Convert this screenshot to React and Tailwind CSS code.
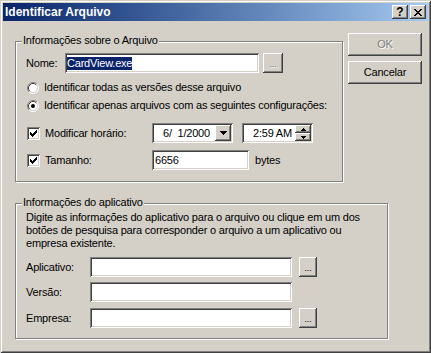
import React from "react";

const OUT = "shadow-[inset_-1px_-1px_#404040,inset_1px_1px_#ffffff,inset_-2px_-2px_#808080,inset_2px_2px_#d4d0c8]";
const IN = "shadow-[inset_1px_1px_#808080,inset_-1px_-1px_#ffffff,inset_2px_2px_#404040,inset_-2px_-2px_#d4d0c8]";
const ETCH = "border border-[#808080] shadow-[inset_1px_1px_#ffffff,1px_1px_#ffffff]";

function Radio({ checked }) {
  return (
    <svg width="12" height="12" viewBox="0 0 12 12" className="shrink-0">
      <circle cx="6" cy="6" r="5" fill="#fff" />
      <path d="M2.11 9.89A5.5 5.5 0 0 1 9.89 2.11" stroke="#808080" fill="none" />
      <path d="M9.89 2.11A5.5 5.5 0 0 1 2.11 9.89" stroke="#ffffff" fill="none" />
      <path d="M2.82 9.18A4.5 4.5 0 0 1 9.18 2.82" stroke="#404040" fill="none" />
      <path d="M9.18 2.82A4.5 4.5 0 0 1 2.82 9.18" stroke="#d4d0c8" fill="none" />
      {checked && <circle cx="6" cy="6" r="2" fill="#000" />}
    </svg>
  );
}

function Check() {
  return (
    <div className={`w-[13px] h-[13px] bg-white shrink-0 ${IN}`}>
      <svg width="13" height="13" viewBox="0 0 13 13" shapeRendering="crispEdges">
        <path
          d="M3 5h1v3H3z M4 6h1v3H4z M5 7h1v3H5z M6 6h1v3H6z M7 5h1v3H7z M8 4h1v3H8z M9 3h1v3H9z"
          fill="#000"
        />
      </svg>
    </div>
  );
}

function Btn({ className = "", disabled, children }) {
  return (
    <div
      className={`bg-[#d4d0c8] flex items-center justify-center ${OUT} ${className} ${
        disabled ? "text-[#808080] [text-shadow:1px_1px_#ffffff]" : "text-black"
      }`}
    >
      {children}
    </div>
  );
}

function Input({ className = "", children }) {
  return <div className={`bg-white h-[20px] flex items-center pl-[2px] ${IN} ${className}`}>{children}</div>;
}

function Legend({ children }) {
  return (
    <span className="absolute left-[6px] top-[-8px] px-[1px] bg-[#d4d0c8] leading-[13px] whitespace-nowrap">
      {children}
    </span>
  );
}

export default function App() {
  return (
    <div className="w-[431px] h-[353px] bg-[#d4d0c8] p-[3px] flex flex-col text-[11px] leading-[13px] text-black font-['Liberation_Sans',Arial,sans-serif] shadow-[inset_1px_1px_#d4d0c8,inset_-1px_-1px_#404040,inset_2px_2px_#ffffff,inset_-2px_-2px_#808080]">
      {/* Title bar */}
      <div className="h-[18px] shrink-0 flex items-center justify-between pl-[2px] pr-[2px] bg-gradient-to-r from-[#0a246a] to-[#a6caf0]">
        <span className="text-white font-bold text-[12px] leading-[13px]">Identificar Arquivo</span>
        <div className="flex gap-[2px]">
          <div className={`w-[16px] h-[14px] bg-[#d4d0c8] flex items-center justify-center font-bold text-[12px] leading-[12px] ${OUT}`}>
            ?
          </div>
          <div className={`w-[16px] h-[14px] bg-[#d4d0c8] flex items-center justify-center ${OUT}`}>
            <svg width="8" height="7" viewBox="0 0 8 7" shapeRendering="crispEdges">
              <path
                d="M0 0h2v1H0z M6 0h2v1H6z M1 1h2v1H1z M5 1h2v1H5z M2 2h4v1H2z M3 3h2v1H3z M2 4h4v1H2z M1 5h2v1H1z M5 5h2v1H5z M0 6h2v1H0z M6 6h2v1H6z"
                fill="#000"
              />
            </svg>
          </div>
        </div>
      </div>

      {/* Body */}
      <div className="flex flex-col tracking-[-0.2px]">
        <div className="flex items-start">
          {/* Group 1 */}
          <div className={`relative ml-[12px] mt-[20px] w-[328px] pl-[10px] pt-[11px] pb-[11px] ${ETCH}`}>
            <Legend>Informações sobre o Arquivo</Legend>

            <div className="flex items-center h-[20px]">
              <span className="w-[39px]">Nome:</span>
              <Input className="w-[194px]">
                <span className="bg-[#0a246a] text-white">CardView.exe</span>
              </Input>
              <Btn className="ml-[4px] w-[20px] h-[20px]" disabled>
                <span className="text-[9px] leading-[9px] mt-[2px]">...</span>
              </Btn>
            </div>

            <div className="flex items-center h-[13px] mt-[8px] pl-[1px]">
              <Radio />
              <span className="ml-[5px] whitespace-nowrap">Identificar todas as versões desse arquivo</span>
            </div>
            <div className="flex items-center h-[13px] mt-[5px] pl-[1px]">
              <Radio checked />
              <span className="ml-[5px] whitespace-nowrap">Identificar apenas arquivos com as seguintes configurações:</span>
            </div>

            <div className="flex items-center h-[20px] mt-[11px]">
              <div className="w-[126px] flex items-center pl-[1px]">
                <Check />
                <span className="ml-[5px] whitespace-nowrap">Modificar horário:</span>
              </div>
              <div className={`w-[81px] h-[20px] bg-white flex items-center justify-between p-[2px] ${IN}`}>
                <span className="pl-[9px] whitespace-pre">6/  1/2000</span>
                <div className={`w-[16px] h-[16px] bg-[#d4d0c8] flex items-center justify-center ${OUT}`}>
                  <svg width="7" height="4" viewBox="0 0 7 4" shapeRendering="crispEdges">
                    <path d="M0 0h7v1H0z M1 1h5v1H1z M2 2h3v1H2z M3 3h1v1H3z" fill="#000" />
                  </svg>
                </div>
              </div>
              <div className={`ml-[9px] w-[71px] h-[20px] bg-white flex items-center justify-between p-[2px] ${IN}`}>
                <span className="pl-[9px] whitespace-nowrap">2:59 AM</span>
                <div className="w-[16px] h-[16px] flex flex-col">
                  <div className={`h-[8px] bg-[#d4d0c8] flex items-center justify-center ${OUT}`}>
                    <svg width="5" height="3" viewBox="0 0 5 3" shapeRendering="crispEdges">
                      <path d="M2 0h1v1H2z M1 1h3v1H1z M0 2h5v1H0z" fill="#000" />
                    </svg>
                  </div>
                  <div className={`h-[8px] bg-[#d4d0c8] flex items-center justify-center ${OUT}`}>
                    <svg width="5" height="3" viewBox="0 0 5 3" shapeRendering="crispEdges">
                      <path d="M0 0h5v1H0z M1 1h3v1H1z M2 2h1v1H2z" fill="#000" />
                    </svg>
                  </div>
                </div>
              </div>
            </div>

            <div className="flex items-center h-[20px] mt-[7px]">
              <div className="w-[126px] flex items-center pl-[1px]">
                <Check />
                <span className="ml-[5px]">Tamanho:</span>
              </div>
              <Input className="w-[97px] pl-[3px]">6656</Input>
              <span className="ml-[6px]">bytes</span>
            </div>
          </div>

          {/* Buttons */}
          <div className="ml-[5px] mt-[12px] flex flex-col gap-[5px]">
            <Btn className="w-[74px] h-[23px]" disabled>OK</Btn>
            <Btn className="w-[74px] h-[23px]">Cancelar</Btn>
          </div>
        </div>

        {/* Group 2 */}
        <div className={`relative ml-[12px] mt-[21px] w-[373px] pl-[10px] pt-[7px] pb-[10px] ${ETCH}`}>
          <Legend>Informações do aplicativo</Legend>
          <p className="whitespace-nowrap">
            Digite as informações do aplicativo para o arquivo ou clique em um dos
            <br />
            botões de pesquisa para corresponder o arquivo a um aplicativo ou
            <br />
            empresa existente.
          </p>

          <div className="flex items-center h-[20px] mt-[7px]">
            <span className="w-[64px]">Aplicativo:</span>
            <Input className="w-[202px]" />
            <Btn className="ml-[7px] w-[18px] h-[20px]">
              <span className="text-[9px] leading-[9px] mt-[2px]">...</span>
            </Btn>
          </div>
          <div className="flex items-center h-[20px] mt-[5px]">
            <span className="w-[64px]">Versão:</span>
            <Input className="w-[202px]" />
          </div>
          <div className="flex items-center h-[20px] mt-[6px]">
            <span className="w-[64px]">Empresa:</span>
            <Input className="w-[202px]" />
            <Btn className="ml-[7px] w-[18px] h-[20px]">
              <span className="text-[9px] leading-[9px] mt-[2px]">...</span>
            </Btn>
          </div>
        </div>
      </div>
    </div>
  );
}
